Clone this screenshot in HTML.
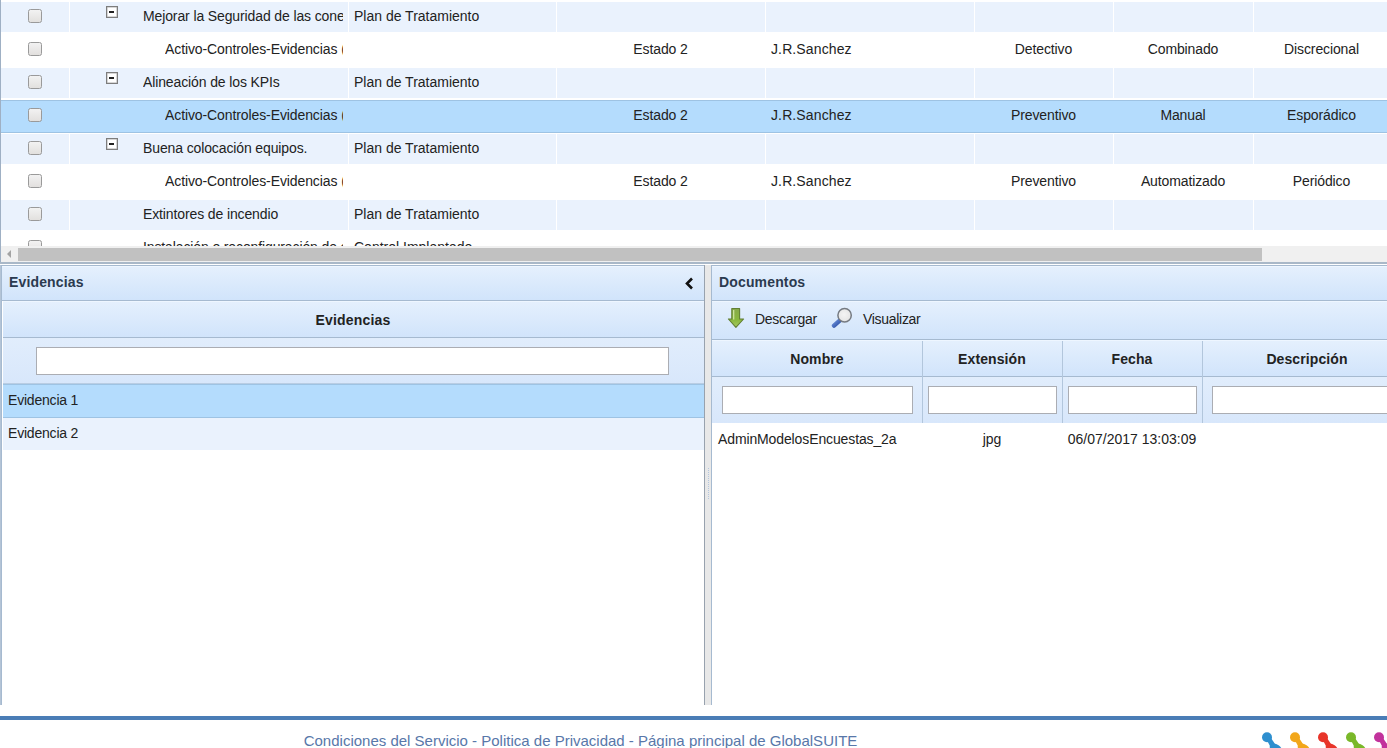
<!DOCTYPE html>
<html><head><meta charset="utf-8">
<style>
*{margin:0;padding:0;box-sizing:border-box}
html,body{width:1387px;height:748px;overflow:hidden;background:#fff;font-family:"Liberation Sans",sans-serif;font-size:14px;color:#222}
.a{position:absolute}
#top{left:0;top:0;width:1387px;height:246px;overflow:hidden}
.row{position:absolute;left:0;width:1387px;height:33px}
.fill{position:absolute;left:1px;right:0;top:2px;height:30px;background:#eaf2fd}
.sel .fill{top:1px;height:33px;background:#b4dcfd;border-top:1px solid #9ec3e3;border-bottom:1px solid #9ec3e3}
.sep{position:absolute;top:2px;height:30px;width:1px;background:#fff}
.sel .sep{display:none}
.cb{position:absolute;left:28px;top:9px;width:14px;height:14px;border:1px solid #9a9a9a;border-radius:2.5px;background:linear-gradient(#f2f2f2,#e2e0de)}
.mi{position:absolute;left:106px;top:6px;width:12px;height:12px;border:1px solid #7d7d7d;box-shadow:inset 0 0 0 0.5px #b0b0b0;background:#fff}
.mi:after{content:"";position:absolute;left:2px;top:4px;width:5px;height:2px;background:#222}
.t{position:absolute;top:0;height:33px;line-height:33px;white-space:nowrap;overflow:hidden;color:#222;letter-spacing:-0.12px}
.c{text-align:center}
</style></head><body>
<div id="top" class="a">
<div class="row lt" style="top:0px"><div class="fill"></div><div class="sep" style="left:69px"></div><div class="sep" style="left:348px"></div><div class="sep" style="left:556px"></div><div class="sep" style="left:765px"></div><div class="sep" style="left:974px"></div><div class="sep" style="left:1113px"></div><div class="sep" style="left:1253px"></div><div class="cb"></div><div class="mi"></div><div class="t" style="left:143px;width:200px">Mejorar la Seguridad de las conexiones</div><div class="t" style="left:354px;width:195px;letter-spacing:0">Plan de Tratamiento</div></div>
<div class="row wh" style="top:33px"><div class="cb"></div><div class="t" style="left:165px;width:178px;letter-spacing:-0.1px">Activo-Controles-Evidencias (2)</div><div class="t c" style="left:556px;width:209px">Estado 2</div><div class="t" style="left:771px;width:200px;letter-spacing:0.12px">J.R.Sanchez</div><div class="t c" style="left:974px;width:139px">Detectivo</div><div class="t c" style="left:1113px;width:140px">Combinado</div><div class="t c" style="left:1253px;width:137px">Discrecional</div></div>
<div class="row lt" style="top:66px"><div class="fill"></div><div class="sep" style="left:69px"></div><div class="sep" style="left:348px"></div><div class="sep" style="left:556px"></div><div class="sep" style="left:765px"></div><div class="sep" style="left:974px"></div><div class="sep" style="left:1113px"></div><div class="sep" style="left:1253px"></div><div class="cb"></div><div class="mi"></div><div class="t" style="left:143px;width:200px">Alineación de los KPIs</div><div class="t" style="left:354px;width:195px;letter-spacing:0">Plan de Tratamiento</div></div>
<div class="row sel" style="top:99px"><div class="fill"></div><div class="sep" style="left:69px"></div><div class="sep" style="left:348px"></div><div class="sep" style="left:556px"></div><div class="sep" style="left:765px"></div><div class="sep" style="left:974px"></div><div class="sep" style="left:1113px"></div><div class="sep" style="left:1253px"></div><div class="cb"></div><div class="t" style="left:165px;width:178px;letter-spacing:-0.1px">Activo-Controles-Evidencias (2)</div><div class="t c" style="left:556px;width:209px">Estado 2</div><div class="t" style="left:771px;width:200px;letter-spacing:0.12px">J.R.Sanchez</div><div class="t c" style="left:974px;width:139px">Preventivo</div><div class="t c" style="left:1113px;width:140px">Manual</div><div class="t c" style="left:1253px;width:137px">Esporádico</div></div>
<div class="row lt" style="top:132px"><div class="fill"></div><div class="sep" style="left:69px"></div><div class="sep" style="left:348px"></div><div class="sep" style="left:556px"></div><div class="sep" style="left:765px"></div><div class="sep" style="left:974px"></div><div class="sep" style="left:1113px"></div><div class="sep" style="left:1253px"></div><div class="cb"></div><div class="mi"></div><div class="t" style="left:143px;width:200px">Buena colocación equipos.</div><div class="t" style="left:354px;width:195px;letter-spacing:0">Plan de Tratamiento</div></div>
<div class="row wh" style="top:165px"><div class="cb"></div><div class="t" style="left:165px;width:178px;letter-spacing:-0.1px">Activo-Controles-Evidencias (2)</div><div class="t c" style="left:556px;width:209px">Estado 2</div><div class="t" style="left:771px;width:200px;letter-spacing:0.12px">J.R.Sanchez</div><div class="t c" style="left:974px;width:139px">Preventivo</div><div class="t c" style="left:1113px;width:140px">Automatizado</div><div class="t c" style="left:1253px;width:137px">Periódico</div></div>
<div class="row lt" style="top:198px"><div class="fill"></div><div class="sep" style="left:69px"></div><div class="sep" style="left:348px"></div><div class="sep" style="left:556px"></div><div class="sep" style="left:765px"></div><div class="sep" style="left:974px"></div><div class="sep" style="left:1113px"></div><div class="sep" style="left:1253px"></div><div class="cb"></div><div class="t" style="left:143px;width:200px">Extintores de incendio</div><div class="t" style="left:354px;width:195px;letter-spacing:0">Plan de Tratamiento</div></div>
<div class="row wh" style="top:231px"><div class="cb"></div><div class="t" style="left:143px;width:200px">Instalación o reconfiguración de equipos</div><div class="t" style="left:354px;width:195px;letter-spacing:0">Control Implantado</div></div>
</div>
<div class="a" style="left:0;top:0;width:1px;height:262px;background:#9fb0c4"></div>
<div class="a" style="left:1px;top:246px;width:1386px;height:16px;background:#f0f0f0"></div>
<div class="a" style="left:18px;top:248px;width:1244px;height:13px;background:#c1c1c1"></div>
<div class="a" style="left:7px;top:250px;width:0;height:0;border-top:4px solid transparent;border-bottom:4px solid transparent;border-right:4px solid #a3a3a3"></div>
<div class="a" style="left:0;top:262px;width:1387px;height:2px;background:#a9b8c8"></div>
<div class="a" style="left:1px;top:265px;width:704px;height:440px;border:1px solid #a6bad0;border-bottom:none;background:#fff"></div>
<div class="a" style="left:0;top:265px;width:1px;height:440px;background:#b4c4d6"></div>
<div class="a" style="left:2px;top:266px;width:702px;height:35px;background:linear-gradient(#e5f0fd,#d1e4fb);box-shadow:inset 0 1px 0 #eef6ff;border-bottom:1px solid #a6bad0"></div>
<div class="a" style="left:9px;top:266px;height:34px;line-height:32px;font-weight:bold;color:#2b3a4f;letter-spacing:0.15px">Evidencias</div>
<svg class="a" style="left:684px;top:277px" width="10" height="13" viewBox="0 0 10 13"><path d="M8 1.5 L3 6.5 L8 11.5" fill="none" stroke="#111" stroke-width="2.6"/></svg>
<div class="a" style="left:3px;top:301px;width:701px;height:37px;background:linear-gradient(#e5f0fd,#d1e4fb);box-shadow:inset 0 1px 0 #eef6ff;border-bottom:1px solid #a6bad0"></div>
<div class="a" style="left:3px;top:301px;width:700px;height:37px;line-height:39px;text-align:center;font-weight:bold;color:#222;letter-spacing:0.2px">Evidencias</div>
<div class="a" style="left:3px;top:338px;width:701px;height:46px;background:linear-gradient(#e1edfc,#d8e7fb);border-bottom:1px solid #b9cde3"></div>
<div class="a" style="left:36px;top:347px;width:633px;height:28px;background:#fff;border:1px solid #abadb3"></div>
<div class="a" style="left:3px;top:384px;width:701px;height:34px;background:#b4dcfd;border-top:1px solid #9ec3e3;border-bottom:1px solid #9ec3e3"></div>
<div class="a" style="left:8px;top:384px;height:33px;line-height:33px;letter-spacing:-0.2px">Evidencia 1</div>
<div class="a" style="left:3px;top:418px;width:701px;height:32px;background:#eaf2fd"></div>
<div class="a" style="left:8px;top:417px;height:33px;line-height:33px;letter-spacing:-0.2px">Evidencia 2</div>
<div class="a" style="left:704px;top:265px;width:8px;height:440px;background:#e8e8e8;border-left:1px solid #98a2ae;border-right:1px solid #98a2ae"></div>
<div class="a" style="left:708px;top:468px;width:1px;height:31px;border-left:1px dotted #b3c6de"></div>
<div class="a" style="left:711px;top:265px;width:680px;height:440px;border:1px solid #a6bad0;border-bottom:none;background:#fff"></div>
<div class="a" style="left:712px;top:266px;width:680px;height:35px;background:linear-gradient(#e5f0fd,#d1e4fb);box-shadow:inset 0 1px 0 #eef6ff;border-bottom:1px solid #a6bad0"></div>
<div class="a" style="left:719px;top:266px;height:34px;line-height:32px;font-weight:bold;color:#2b3a4f;letter-spacing:0.15px">Documentos</div>
<div class="a" style="left:712px;top:301px;width:680px;height:39px;background:linear-gradient(#e5f0fd,#d1e4fb);box-shadow:inset 0 1px 0 #eef6ff;border-bottom:1px solid #a6bad0"></div>
<svg class="a" style="left:726px;top:307px" width="20" height="22" viewBox="0 0 20 22">
 <defs><linearGradient id="ga" x1="0" y1="0" x2="0" y2="1"><stop offset="0" stop-color="#86a94a"/><stop offset="0.6" stop-color="#8ab83e"/><stop offset="1" stop-color="#a6c860"/></linearGradient></defs>
 <path d="M5.8 1.5 H13.6 V12 H17.6 L9.9 20.4 L2.4 12 H5.8 Z" fill="url(#ga)" stroke="#627f34" stroke-width="1.1" stroke-linejoin="round"/>
 <path d="M7.7 3 V12.5" stroke="#d2e8a6" stroke-width="1.2"/>
</svg>
<div class="a" style="left:755px;top:301px;height:38px;line-height:36px;letter-spacing:-0.3px">Descargar</div>
<svg class="a" style="left:831px;top:307px" width="22" height="22" viewBox="0 0 22 22">
 <defs><radialGradient id="gm" cx="0.45" cy="0.45" r="0.6"><stop offset="0" stop-color="#f4f4f4"/><stop offset="0.8" stop-color="#e6e6e6"/><stop offset="1" stop-color="#d0d0d0"/></radialGradient>
 <linearGradient id="gh" x1="0" y1="0" x2="1" y2="1"><stop offset="0" stop-color="#6a8fd8"/><stop offset="1" stop-color="#2c4fa6"/></linearGradient></defs>
 <path d="M3 18.6 L8.6 13.6" stroke="url(#gh)" stroke-width="4.4" stroke-linecap="round"/>
 <circle cx="13.6" cy="8.2" r="6.7" fill="url(#gm)" stroke="#767b82" stroke-width="1.5"/>
</svg>
<div class="a" style="left:863px;top:301px;height:38px;line-height:36px;letter-spacing:-0.3px">Visualizar</div>
<div class="a" style="left:712px;top:340px;width:680px;height:37px;background:linear-gradient(#e5f0fd,#d1e4fb);box-shadow:inset 0 1px 0 #eef6ff;border-bottom:1px solid #a6bad0"></div>
<div class="a" style="left:922px;top:341px;width:1px;height:82px;background:#b2c6dc"></div>
<div class="a" style="left:1062px;top:341px;width:1px;height:82px;background:#b2c6dc"></div>
<div class="a" style="left:1202px;top:341px;width:1px;height:82px;background:#b2c6dc"></div>
<div class="a" style="left:712px;top:339px;width:210px;height:38px;line-height:40px;text-align:center;font-weight:bold;letter-spacing:0.1px">Nombre</div>
<div class="a" style="left:922px;top:339px;width:140px;height:38px;line-height:40px;text-align:center;font-weight:bold;letter-spacing:0.1px">Extensión</div>
<div class="a" style="left:1062px;top:339px;width:140px;height:38px;line-height:40px;text-align:center;font-weight:bold;letter-spacing:0.1px">Fecha</div>
<div class="a" style="left:1202px;top:339px;width:210px;height:38px;line-height:40px;text-align:center;font-weight:bold;letter-spacing:0.1px">Descripción</div>
<div class="a" style="left:712px;top:377px;width:680px;height:46px;background:linear-gradient(#e1edfc,#d8e7fb)"></div>
<div class="a" style="left:922px;top:377px;width:1px;height:46px;background:#b2c6dc"></div>
<div class="a" style="left:1062px;top:377px;width:1px;height:46px;background:#b2c6dc"></div>
<div class="a" style="left:1202px;top:377px;width:1px;height:46px;background:#b2c6dc"></div>
<div class="a" style="left:722px;top:386px;width:191px;height:28px;background:#fff;border:1px solid #abadb3"></div>
<div class="a" style="left:928px;top:386px;width:129px;height:28px;background:#fff;border:1px solid #abadb3"></div>
<div class="a" style="left:1068px;top:386px;width:129px;height:28px;background:#fff;border:1px solid #abadb3"></div>
<div class="a" style="left:1212px;top:386px;width:200px;height:28px;background:#fff;border:1px solid #abadb3"></div>
<div class="a" style="left:718px;top:423px;height:32px;line-height:32px;letter-spacing:-0.12px">AdminModelosEncuestas_2a</div>
<div class="a" style="left:922px;top:423px;width:140px;height:32px;line-height:32px;text-align:center">jpg</div>
<div class="a" style="left:1062px;top:423px;width:140px;height:32px;line-height:32px;text-align:center">06/07/2017 13:03:09</div>
<div class="a" style="left:0;top:716px;width:1387px;height:4px;background:#4a7db6"></div>
<div class="a" style="left:0;top:731px;width:1161px;height:20px;line-height:20px;text-align:center;font-size:15px;color:#5877a9">Condiciones del Servicio - Politica de Privacidad - Página principal de GlobalSUITE</div>
<svg class="a" style="left:1250px;top:725px;filter:blur(0.35px)" width="137" height="23" viewBox="1250 725 137 23"><g fill="#2e8fcf"><circle cx="1267" cy="737.2" r="5"/><path d="M1267 740.5 L1271 738 L1275 744 L1270 746 Z"/><ellipse cx="1276" cy="749" rx="7" ry="4.5" transform="rotate(35 1276 749)"/></g><g fill="#f2a71b"><circle cx="1295" cy="737.2" r="5"/><path d="M1295 740.5 L1299 738 L1303 744 L1298 746 Z"/><ellipse cx="1304" cy="749" rx="7" ry="4.5" transform="rotate(35 1304 749)"/></g><g fill="#e8352a"><circle cx="1323" cy="737.2" r="5"/><path d="M1323 740.5 L1327 738 L1331 744 L1326 746 Z"/><ellipse cx="1332" cy="749" rx="7" ry="4.5" transform="rotate(35 1332 749)"/></g><g fill="#7ab829"><circle cx="1351" cy="737.2" r="5"/><path d="M1351 740.5 L1355 738 L1359 744 L1354 746 Z"/><ellipse cx="1360" cy="749" rx="7" ry="4.5" transform="rotate(35 1360 749)"/></g><g fill="#c2329c"><circle cx="1379" cy="737.2" r="5"/><path d="M1379 740.5 L1383 738 L1387 744 L1382 746 Z"/><ellipse cx="1388" cy="749" rx="7" ry="4.5" transform="rotate(35 1388 749)"/></g></svg>
</body></html>
